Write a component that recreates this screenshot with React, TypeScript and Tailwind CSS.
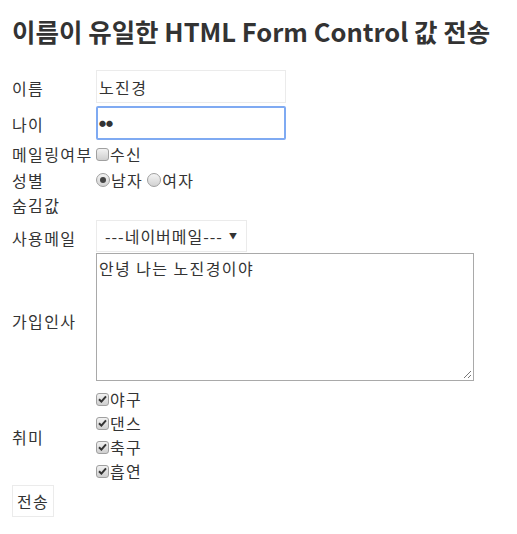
import React from 'react';

const font = { fontFamily: '"Noto Sans CJK KR", "Noto Sans", sans-serif' };

const Check = ({ on }: { on?: boolean }) => (
  <span className="inline-flex h-[13px] w-[13px] shrink-0 items-center justify-center rounded-[3px] border border-[#a0a0a0] bg-gradient-to-b from-[#f2f2f2] to-[#cfcfcf]">
    {on && (
      <svg width="9" height="8" viewBox="0 0 9 8">
        <path d="M1 4.2 L3.4 6.6 L8 1.4" stroke="#333" strokeWidth="2" fill="none" />
      </svg>
    )}
  </span>
);

const Radio = ({ on }: { on?: boolean }) => (
  <span className="inline-flex h-[14px] w-[14px] shrink-0 items-center justify-center rounded-full border border-[#a0a0a0] bg-gradient-to-b from-[#f4f4f4] to-[#d2d2d2]">
    {on && <span className="h-[6px] w-[6px] rounded-full bg-[#444]" />}
  </span>
);

const Row = ({ label, h, children }: { label: string; h: string; children?: React.ReactNode }) => (
  <div className={`flex items-center ${h}`}>
    <div className="w-[84px] shrink-0">{label}</div>
    <div className="flex items-center">{children}</div>
  </div>
);

export default function App() {
  return (
    <div className="min-h-[534px] bg-white px-[12px] text-[16px] leading-[22px] tracking-[1.4px] text-[#333]" style={font}>
      <h1 className="pt-[14px] pb-[22px] text-[25.5px] leading-[34px] font-bold tracking-normal text-[#333]">
        이름이 유일한 HTML Form Control 값 전송
      </h1>
      <div className="flex flex-col">
        <div className="flex h-[36px] items-start">
          <div className="w-[84px] shrink-0 pt-[7px]">이름</div>
          <div className="flex h-[33px] w-[190px] items-center border border-[#ebebeb] px-[2px]">노진경</div>
        </div>
        <div className="flex h-[36px] items-start">
          <div className="w-[84px] shrink-0 pt-[7px]">나이</div>
          <div className="flex h-[34px] w-[190px] items-center rounded-[2px] border-2 border-[#7faaf2] px-[1px]">
            <span className="text-[7px] tracking-[0px] text-[#333]">●●</span>
          </div>
        </div>
        <Row label="메일링여부" h="h-[24px]">
          <Check />
          <span className="ml-[1px]">수신</span>
        </Row>
        <Row label="성별" h="h-[28px]">
          <Radio on />
          <span className="ml-[1px]">남자</span>
          <span className="ml-[4px]"><Radio /></span>
          <span className="ml-[1px]">여자</span>
        </Row>
        <Row label="숨김값" h="h-[22px]" />
        <div className="flex h-[37px] items-end">
          <div className="w-[84px] shrink-0 pb-[4px]">사용메일</div>
          <div className="mb-[1px] flex h-[32px] w-[151px] items-center border border-[#ebebeb] pl-[8px]">
            <span className="tracking-[1px]">---네이버메일---</span>
            <span className="ml-[6px] text-[8px] tracking-normal">▼</span>
          </div>
        </div>
        <div className="flex h-[128px] items-center">
          <div className="w-[84px] shrink-0 pt-[8px]">가입인사</div>
          <div className="relative h-[128px] w-[378px] border border-[#a9a9a9] px-[2px] pt-[3px]">
            안녕 나는 노진경이야
            <svg className="absolute right-[1px] bottom-[1px]" width="10" height="10" viewBox="0 0 10 10">
              <path d="M9 2 L2 9 M9 6 L6 9" stroke="#777" strokeWidth="1" />
            </svg>
          </div>
        </div>
        <div className="flex items-center pt-[6px]">
          <div className="w-[84px] shrink-0 pt-[4px]">취미</div>
          <div className="flex flex-col">
            {['야구', '댄스', '축구', '흡연'].map((t) => (
              <div key={t} className="flex h-[24px] items-center">
                <Check on />
                <span className="ml-[1px]">{t}</span>
              </div>
            ))}
          </div>
        </div>
        <div className="pt-[2px]">
          <div className="inline-flex h-[32px] w-[42px] items-center justify-center border border-[#ebebeb]">전송</div>
        </div>
      </div>
    </div>
  );
}
